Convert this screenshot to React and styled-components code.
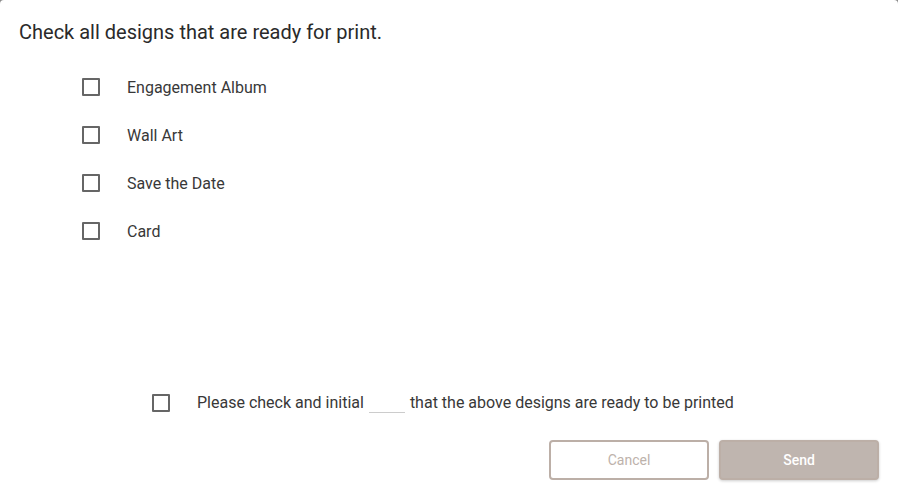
import React from 'react'
import styled, { createGlobalStyle } from 'styled-components'

const GlobalStyle = createGlobalStyle`
    html, body {
        margin: 0;
        padding: 0;
        background: #8a8a8a;
        font-family: Roboto, "Liberation Sans", sans-serif;
    }
`

const Dialog = styled.div`
    width: 898px;
    height: 499px;
    box-sizing: border-box;
    background: white;
    border-radius: 4px 4px 0 0;
    padding: 19px 19px 0 19px;
    display: flex;
    flex-direction: column;
`

const Title = styled.h2`
    margin: 0;
    font-size: 20px;
    font-weight: 400;
    line-height: 26px;
    color: #2a2a2a;
`

const List = styled.div`
    display: flex;
    flex-direction: column;
    gap: 30px;
    margin-top: 33px;
    padding-left: 63px;
`

const Row = styled.label`
    display: flex;
    align-items: center;
    height: 18px;
    gap: 27px;
    font-size: 16px;
    color: #383838;
`

const Box = styled.span`
    width: 18px;
    height: 18px;
    box-sizing: border-box;
    border: 2px solid #666;
    border-radius: 1px;
    flex-shrink: 0;
`

const Confirm = styled(Row)`
    margin-top: auto;
    padding-left: 133px;
    margin-bottom: 28px;
`

const Blank = styled.span`
    display: inline-block;
    width: 36px;
    height: 1px;
    background: #ccc;
    margin: 0 5px;
    vertical-align: -5px;
`

const Actions = styled.div`
    display: flex;
    justify-content: flex-end;
    gap: 10px;
    padding-bottom: 19px;
`

const Button = styled.button`
    width: 160px;
    height: 40px;
    box-sizing: border-box;
    border-radius: 4px;
    font-family: Roboto, "Liberation Sans", sans-serif;
    font-size: 14px;
    font-weight: ${p => p.primary ? 500 : 400};
    color: ${p => p.primary ? 'white' : '#bdb2ab'};
    background: ${p => p.primary ? '#bfb5af' : 'white'};
    border: 2px solid #bcafa7;
    box-shadow: ${p => p.primary ? '0 1px 3px rgba(0,0,0,0.2)' : 'none'};
`

const designs = ['Engagement Album', 'Wall Art', 'Save the Date', 'Card']

export default function App() {
    return (
        <>
            <GlobalStyle />
            <Dialog>
                <Title>Check all designs that are ready for print.</Title>
                <List>
                    {designs.map(d => (
                        <Row key={d}>
                            <Box />
                            {d}
                        </Row>
                    ))}
                </List>
                <Confirm>
                    <Box />
                    <span>Please check and initial<Blank />that the above designs are ready to be printed</span>
                </Confirm>
                <Actions>
                    <Button>Cancel</Button>
                    <Button primary>Send</Button>
                </Actions>
            </Dialog>
        </>
    )
}
